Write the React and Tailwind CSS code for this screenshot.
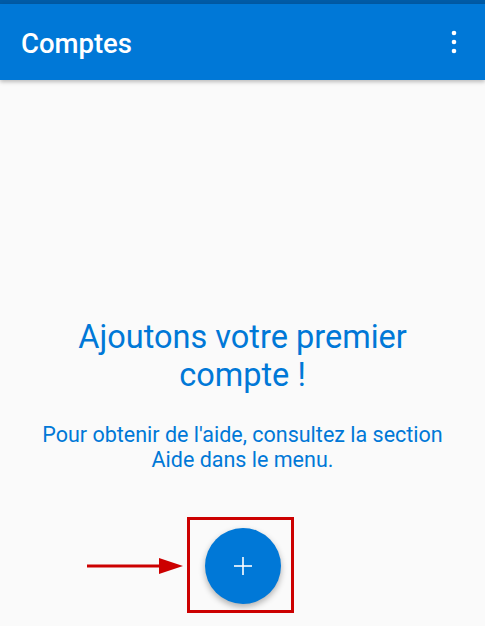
import React from 'react';

const font = { fontFamily: 'Roboto, "Noto Sans", sans-serif' };

function KebabIcon() {
    return (
        <svg width="6" height="24" viewBox="0 0 6 24" className="fill-white">
            <circle cx="3" cy="3" r="2.3" />
            <circle cx="3" cy="12" r="2.3" />
            <circle cx="3" cy="21" r="2.3" />
        </svg>
    );
}

export default function App() {
    return (
        <div className="w-[485px] h-[626px] bg-[#fafafa] flex flex-col overflow-hidden" style={font}>
            {/* status strip */}
            <div className="h-[4px] bg-[#005ba6]" />

            {/* app bar */}
            <header className="h-[76px] bg-[#0078d7] flex items-center justify-between pl-[21px] pr-[28px] shadow-[0_2px_4px_rgba(0,0,0,0.25)] z-10">
                <h1 className="text-white text-[27.5px] font-medium leading-none pt-[3px]">Comptes</h1>
                <KebabIcon />
            </header>

            {/* empty state */}
            <main className="flex-1 flex flex-col items-center pt-[238px]">
                <h2 className="text-[#0078d7] text-[32.5px] leading-[38px] text-center w-[380px]">
                    Ajoutons votre premier compte !
                </h2>
                <p className="mt-[28px] text-[#0078d7] text-[21.5px] leading-[25px] text-center w-[440px]">
                    Pour obtenir de l'aide, consultez la section Aide dans le menu.
                </p>

                <div className="relative mt-[56px] w-[76px] h-[76px]">
                    <button className="w-[76px] h-[76px] rounded-full bg-[#0078d7] flex items-center justify-center shadow-[0_3px_6px_rgba(0,0,0,0.3)]">
                        <svg width="20" height="20" viewBox="0 0 20 20" className="stroke-white" strokeWidth="1.6">
                            <line x1="10" y1="1" x2="10" y2="19" />
                            <line x1="1" y1="10" x2="19" y2="10" />
                        </svg>
                    </button>

                    {/* annotation */}
                    <div className="absolute -left-[18px] -top-[11px] w-[107px] h-[96px] border-[3px] border-[#cc0000]" />
                    <svg className="absolute -left-[118px] top-[29px]" width="96" height="18" viewBox="0 0 96 18">
                        <line x1="0" y1="9" x2="80" y2="9" stroke="#cc0000" strokeWidth="3" />
                        <polygon points="72,1 96,9 72,17" fill="#cc0000" />
                    </svg>
                </div>
            </main>
        </div>
    );
}
